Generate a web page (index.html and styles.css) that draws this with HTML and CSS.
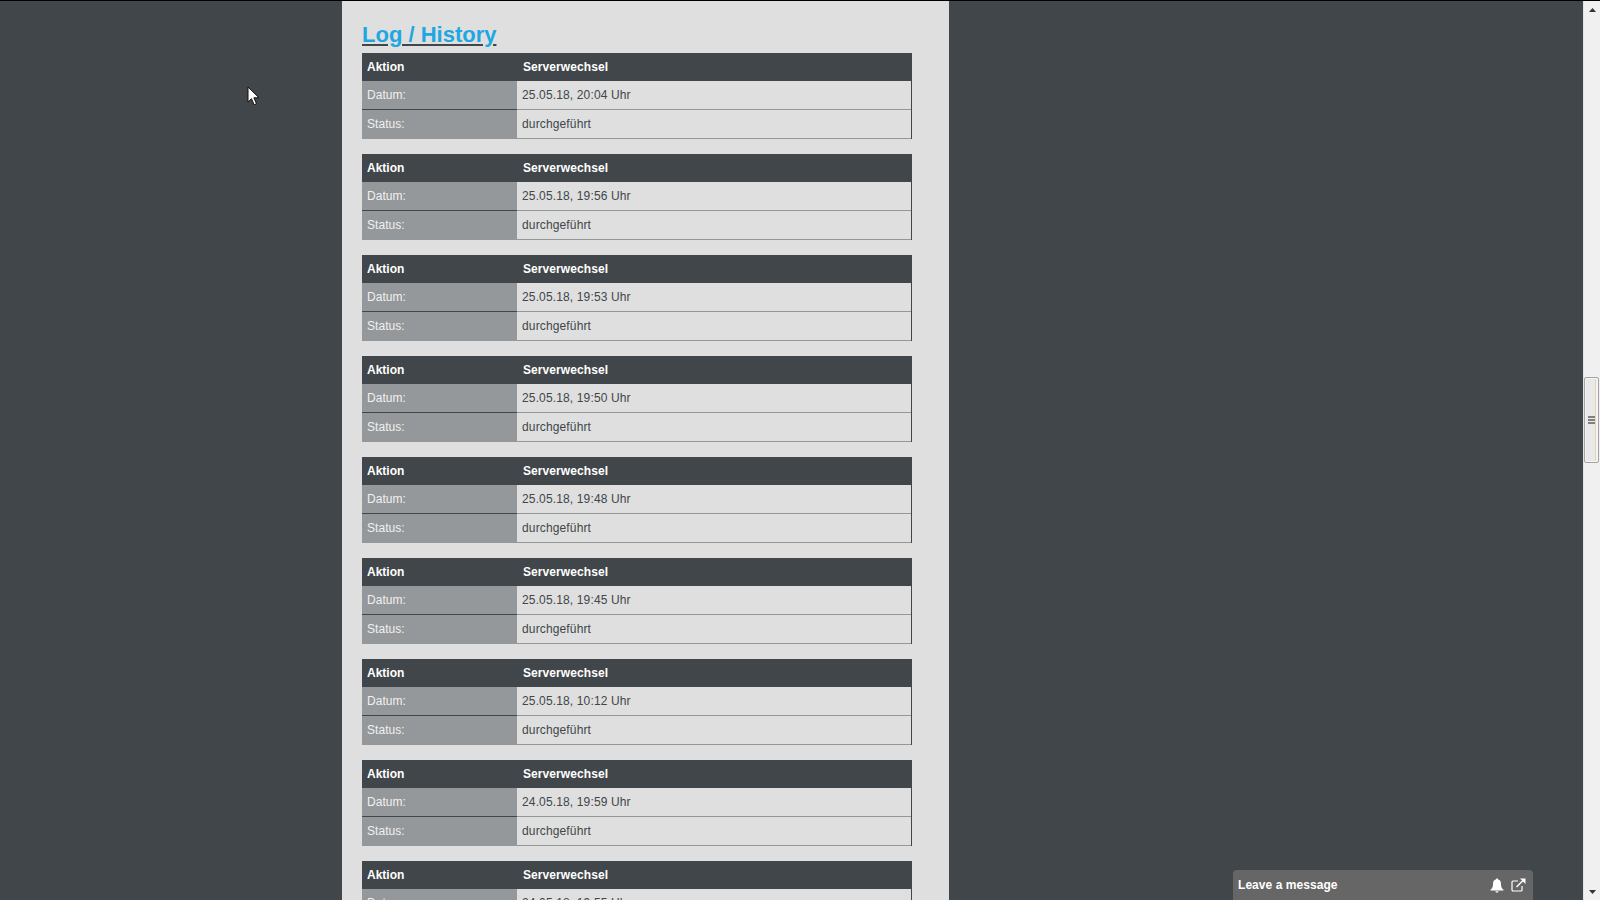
FILE: index.html
```html
<!DOCTYPE html>
<html lang="de">
<head>
<meta charset="utf-8">
<title>Log / History</title>
<link rel="stylesheet" href="styles.css">
</head>
<body>
<div class="viewport">
  <main class="page">
    <section class="panel">
      <h2 class="title"><a href="#">Log / History</a></h2>
      <table class="log"><tr class="head"><th>Aktion</th><th>Serverwechsel</th></tr><tr><td>Datum:</td><td>25.05.18, 20:04 Uhr</td></tr><tr><td>Status:</td><td>durchgeführt</td></tr></table>
      <table class="log"><tr class="head"><th>Aktion</th><th>Serverwechsel</th></tr><tr><td>Datum:</td><td>25.05.18, 19:56 Uhr</td></tr><tr><td>Status:</td><td>durchgeführt</td></tr></table>
      <table class="log"><tr class="head"><th>Aktion</th><th>Serverwechsel</th></tr><tr><td>Datum:</td><td>25.05.18, 19:53 Uhr</td></tr><tr><td>Status:</td><td>durchgeführt</td></tr></table>
      <table class="log"><tr class="head"><th>Aktion</th><th>Serverwechsel</th></tr><tr><td>Datum:</td><td>25.05.18, 19:50 Uhr</td></tr><tr><td>Status:</td><td>durchgeführt</td></tr></table>
      <table class="log"><tr class="head"><th>Aktion</th><th>Serverwechsel</th></tr><tr><td>Datum:</td><td>25.05.18, 19:48 Uhr</td></tr><tr><td>Status:</td><td>durchgeführt</td></tr></table>
      <table class="log"><tr class="head"><th>Aktion</th><th>Serverwechsel</th></tr><tr><td>Datum:</td><td>25.05.18, 19:45 Uhr</td></tr><tr><td>Status:</td><td>durchgeführt</td></tr></table>
      <table class="log"><tr class="head"><th>Aktion</th><th>Serverwechsel</th></tr><tr><td>Datum:</td><td>25.05.18, 10:12 Uhr</td></tr><tr><td>Status:</td><td>durchgeführt</td></tr></table>
      <table class="log"><tr class="head"><th>Aktion</th><th>Serverwechsel</th></tr><tr><td>Datum:</td><td>24.05.18, 19:59 Uhr</td></tr><tr><td>Status:</td><td>durchgeführt</td></tr></table>
      <table class="log"><tr class="head"><th>Aktion</th><th>Serverwechsel</th></tr><tr><td>Datum:</td><td>24.05.18, 19:55 Uhr</td></tr><tr><td>Status:</td><td>durchgeführt</td></tr></table>
    </section>
  </main>
  <aside class="scrollbar">
    <svg class="arrow" width="7" height="4" viewBox="0 0 7 4"><path d="M3.5 0 7 4H0z" fill="#333"/></svg>
    <div class="thumb"><span></span><span></span><span></span></div>
    <svg class="arrow" width="7" height="4" viewBox="0 0 7 4"><path d="M0 0h7L3.500 4z" fill="#333"/></svg>
  </aside>
</div>
<div class="chat">
  <span class="chat-label">Leave a message</span>
  <svg class="chat-icon" width="14" height="15" viewBox="0 0 14 15"><path d="M7 0.5c.7 0 1.1.5 1.1 1.1C10.200 2.100 11 3.800 11 6c0 3 .8 4.300 2.500 5.800v.7H.5v-.7C2.200 10.300 3 9 3 6c0-2.200.8-3.900 2.900-4.400C5.900 1 6.300.5 7 .5zM5.300 13.300h3.400C8.500 14.200 7.800 14.700 7 14.700s-1.500-.5-1.700-1.400z" fill="#fff"/></svg>
  <svg class="chat-icon" width="15" height="14" viewBox="0 0 15 14"><path d="M11 8v4a1 1 0 0 1-1 1H2a1 1 0 0 1-1-1V4a1 1 0 0 1 1-1h5" fill="none" stroke="#fff" stroke-width="1.200"/><path d="M5.500 9 13 1.500" fill="none" stroke="#fff" stroke-width="1.500"/><path d="M9 0.500h5.500V6z" fill="#fff"/></svg>
</div>
<svg class="cursor" width="13" height="20" viewBox="0 0 13 20"><path d="M1 1v15l3.500-3.300 2.600 6 2.400-1-2.600-5.900H12z" fill="#fff" stroke="#111" stroke-width="1"/></svg>
</body>
</html>
```
FILE: styles.css
```css
html, body {
  margin: 0;
  height: 900px;
  overflow: hidden;
  background: #40464a;
  font-family: "Liberation Sans", Arial, sans-serif;
}
.viewport {
  display: flex;
  height: 900px;
  border-top: 1px solid #000;
  box-sizing: border-box;
}
.page {
  flex: 1;
  min-width: 0;
  height: 899px;
  overflow: hidden;
}
.panel {
  width: 567px;
  margin-left: 342px;
  padding: 0 20px;
  background: #dfdfdf;
  min-height: 899px;
  overflow: hidden;
}
.title {
  margin: 20px 0 0;
  height: 32px;
  font-size: 22px;
  line-height: 28px;
  font-weight: bold;
}
.title a {
  color: #1ea7e1;
  text-decoration-color: #40464a;
}
.log {
  width: 550px;
  table-layout: fixed;
  border-collapse: separate;
  border-spacing: 0;
  margin-bottom: 15px;
  font-size: 12px;
  border-right: 1px solid #40464a;
  box-sizing: border-box;
}
.log th {
  height: 28px;
  padding: 0 5px;
  background: #40464a;
  color: #fff;
  font-weight: bold;
  text-align: left;
}
.log th:first-child {
  width: 145px;
}
.log th:last-child {
  padding-left: 6px;
  letter-spacing: 0.08px;
}
.log td {
  height: 28px;
  padding: 0 5px;
  background: #dfdfdf;
  color: #40464a;
  letter-spacing: 0.14px;
  border-bottom: 1px solid #959899;
}
.log td:first-child {
  background: #95989a;
  color: #f0f0f0;
  letter-spacing: 0.04px;
  border-bottom-color: #40464a;
}
.log tr:last-child td:first-child {
  border-bottom-color: #95989a;
}
.scrollbar {
  flex: none;
  width: 17px;
  height: 899px;
  box-sizing: border-box;
  background: #f0f0f0;
  border-left: 1px solid #e3e3e3;
  display: flex;
  flex-direction: column;
  align-items: center;
  justify-content: space-between;
  padding: 7px 0 6px;
  position: relative;
}
.thumb {
  position: absolute;
  top: 376px;
  left: 0;
  width: 15px;
  height: 86px;
  box-sizing: border-box;
  border: 1px solid #a3a3a3;
  border-radius: 2px;
  background: #e9e9e9;
  box-shadow: inset 0 0 0 1px #f4f4f4, inset -2px 0 0 #f4f4f4, inset -3px 0 0 #e6d5ad;
  display: flex;
  flex-direction: column;
  align-items: center;
  justify-content: center;
  gap: 1px;
}
.thumb span {
  width: 7px;
  height: 2px;
  background: #808080;
}
.chat {
  position: absolute;
  left: 1233px;
  top: 870px;
  width: 300px;
  height: 30px;
  box-sizing: border-box;
  padding: 0 7px 0 5px;
  background: #666;
  border-radius: 4px 4px 0 0;
  display: flex;
  align-items: center;
  gap: 7px;
  color: #fff;
  font-size: 12px;
  font-weight: bold;
  letter-spacing: 0.05px;
}
.chat-label {
  flex: 1;
}
.cursor {
  position: absolute;
  left: 247px;
  top: 86px;
}
```
